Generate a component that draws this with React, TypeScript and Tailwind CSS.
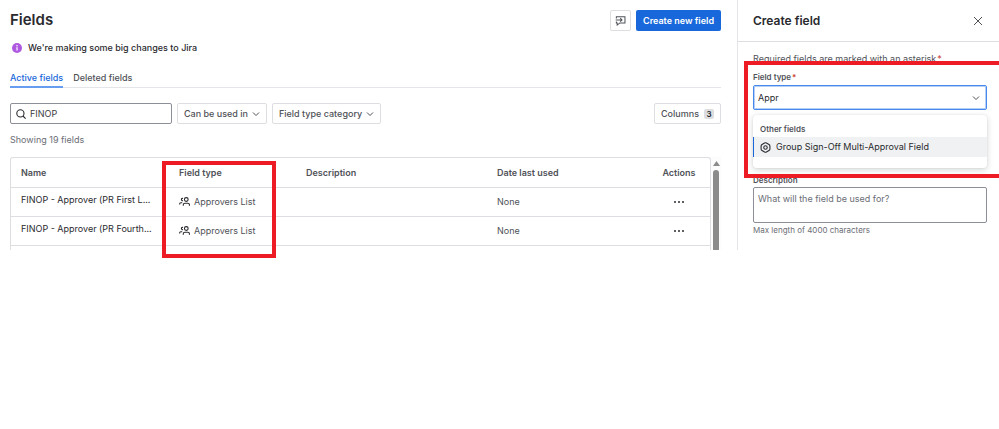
import React from "react";

const rows = [
  { name: "FINOP - Approver (PR First L...", type: "Approvers List", used: "None" },
  { name: "FINOP - Approver (PR Fourth...", type: "Approvers List", used: "None" },
];

function Chevron({ className = "" }: { className?: string }) {
  return (
    <svg viewBox="0 0 8 8" className={`size-2 shrink-0 ${className}`} fill="none" stroke="currentColor" strokeWidth="1" aria-hidden="true">
      <path d="M1 2.5 4 5.5 7 2.5" />
    </svg>
  );
}

function PeopleIcon() {
  return (
    <svg viewBox="0 0 16 13" className="h-[9px] w-[11px] shrink-0 text-[#292a2e]" fill="none" stroke="currentColor" strokeWidth="1.6" aria-hidden="true">
      <circle cx="10.6" cy="3.6" r="2.7" />
      <path d="M6.2 12.8v-1.4c0-1.5 1-2.4 2.4-2.4h4.2c1.4 0 2.4.9 2.4 2.4v1.4" />
      <path d="M5.8 2A1.7 1.7 0 1 0 5.8 5.2M.9 11v-.9c0-1 .8-1.8 1.8-1.8h2" />
    </svg>
  );
}

function FeedbackIcon() {
  return (
    <svg viewBox="0 0 16 16" className="size-[11px]" fill="none" stroke="currentColor" strokeWidth="1.5" aria-hidden="true">
      <path d="M2 5.2V2.5h12.5v9H7L3.2 14.6v-3.1H2V9.4" />
      <path d="M1 7.2h9M7.6 4.6l2.6 2.6-2.6 2.6" />
    </svg>
  );
}

function FilterButton({ label }: { label: string }) {
  return (
    <button type="button" aria-haspopup="listbox" className="flex h-[21px] items-center gap-1 rounded-[2px] border border-[#dddee1] px-[6px] font-medium text-[#505258]">
      {label}
      <Chevron />
    </button>
  );
}

function FieldsPage() {
  return (
    <main className="relative min-w-0 flex-1 pt-[10px] pl-[10px]">
      <header className="mr-4 flex h-[21px] items-center justify-between">
        <h1 className="text-[15px] font-semibold text-[#292a2e]">Fields</h1>
        <div className="flex gap-[5px]">
          <button type="button" aria-label="Give feedback" className="flex h-[21px] w-[21px] items-center justify-center rounded-[2px] border border-[#dddee1] text-[#505258]">
            <FeedbackIcon />
          </button>
          <button type="button" className="h-[21px] rounded-[2px] bg-[#1868db] px-[7px] font-semibold text-white">
            Create new field
          </button>
        </div>
      </header>

      <p className="mt-[10px] flex h-[14px] items-center gap-[6px] pl-[2px] font-medium text-[#292a2e]">
        <svg viewBox="0 0 10 10" className="size-[10px]" aria-hidden="true">
          <circle cx="5" cy="5" r="5" fill="#af59e1" />
          <circle cx="5" cy="2.8" r=".8" fill="#fff" />
          <path d="M5 4.3v3.2" stroke="#fff" strokeWidth="1.2" />
        </svg>
        We're making some big changes to Jira
      </p>

      <nav className="mt-[15px] mr-4 flex gap-[10px] border-b border-[#e4e5e8] font-medium text-[#505258]">
        <a href="#active" aria-current="page" className="-mb-px h-[18px] border-b-2 border-[#669df1] leading-4 text-[#1868db]">Active fields</a>
        <a href="#deleted" className="leading-4">Deleted fields</a>
      </nav>

      <div className="mt-[15px] mr-4 flex h-[21px] items-center gap-[5px]">
        <label className="flex h-[21px] w-[162px] items-center gap-1 rounded-[2px] border border-[#8c8f97] px-[5px]">
          <svg viewBox="0 0 10 10" className="size-[10px] shrink-0 text-[#292a2e]" fill="none" stroke="currentColor" strokeWidth="1.1" aria-hidden="true">
            <circle cx="4.4" cy="4.4" r="3.6" />
            <path d="m7 7 2.6 2.6" />
          </svg>
          <input aria-label="Search fields" defaultValue="FINOP" className="min-w-0 flex-1 text-[#3b3d42] outline-none" />
        </label>
        <FilterButton label="Can be used in" />
        <FilterButton label="Field type category" />
        <button type="button" className="ml-auto flex h-[21px] items-center gap-[5px] rounded-[2px] border border-[#dddee1] px-[6px] font-medium text-[#505258]">
          Columns
          <span className="flex h-[10px] w-[10px] items-center justify-center rounded-[2px] bg-[#dddee1] text-[8px] font-semibold text-[#292a2e]">3</span>
        </button>
      </div>

      <p className="mt-[9px] leading-[14px] text-[#6b6e76]">Showing 19 fields</p>

      <div className="mt-[10px] mr-4 flex items-stretch">
        <div className="min-w-0 flex-1 rounded-t-[3px] border border-b-0 border-[#dddee1] pb-[4px]">
          <table className="w-full table-fixed text-left text-[#505258]">
            <colgroup>
              <col className="w-[157px]" />
              <col className="w-[127px]" />
              <col className="w-[191px]" />
              <col />
              <col className="w-[62px]" />
            </colgroup>
            <thead>
              <tr className="h-[29px] border-b border-[#dddee1]">
                <th className="pl-[10px] font-semibold">Name</th>
                <th className="pl-[11px] font-semibold">Field type</th>
                <th className="pl-[11px] font-semibold">Description</th>
                <th className="pl-[11px] font-semibold">Date last used</th>
                <th className="text-center font-semibold">Actions</th>
              </tr>
            </thead>
            <tbody>
              {rows.map((row) => (
                <tr key={row.name} className="h-[29px] border-b border-[#dddee1]">
                  <td className="truncate pb-[4px] pl-[10px] text-[#292a2e]">{row.name}</td>
                  <td className="pl-[11px]">
                    <span className="flex items-center gap-1">
                      <PeopleIcon />
                      {row.type}
                    </span>
                  </td>
                  <td />
                  <td className="pl-[11px]">{row.used}</td>
                  <td>
                    <button type="button" aria-label="Actions" className="mx-auto flex gap-[2px]">
                      <span className="size-[2px] rounded-full bg-[#292a2e]" />
                      <span className="size-[2px] rounded-full bg-[#292a2e]" />
                      <span className="size-[2px] rounded-full bg-[#292a2e]" />
                    </button>
                  </td>
                </tr>
              ))}
            </tbody>
          </table>
        </div>
        <div className="flex w-[10px] shrink-0 flex-col items-center bg-[#fcfcfc] pt-1" aria-hidden="true">
          <svg viewBox="0 0 7 5" className="h-[5px] w-[7px]">
            <path d="M3.5 0 7 5H0z" fill="#8b8b8b" />
          </svg>
          <span className="mt-1 w-[6px] flex-1 rounded-t-full bg-[#8b8b8b]" />
        </div>
      </div>

      <div className="pointer-events-none absolute top-[161px] left-[162px] h-[97px] w-[114px] border-4 border-[#ed1c24]" />
    </main>
  );
}

function CreateFieldPanel() {
  return (
    <aside className="relative w-[262px] shrink-0 border-l border-[#e4e5e8]">
      <header className="flex h-[42px] items-center justify-between border-b border-[#dddee1] pr-4 pl-[15px]">
        <h2 className="text-[12px] font-semibold text-[#292a2e]">Create field</h2>
        <button type="button" aria-label="Close" className="text-[#505258]">
          <svg viewBox="0 0 10 10" className="size-[10px]" fill="none" stroke="currentColor" strokeWidth="1" aria-hidden="true">
            <path d="m1 1 8 8M9 1 1 9" />
          </svg>
        </button>
      </header>

      <form className="pr-3 pl-[15px] text-[#505258]">
        <p className="mt-[10px] leading-[14px]">
          Required fields are marked with an asterisk<span className="ml-px text-[#c9372c]">*</span>
        </p>

        <div className="relative mt-1">
          <label htmlFor="field-type" className="block text-[8px] leading-[14px] font-semibold">
            Field type<span className="ml-px text-[#c9372c]">*</span>
          </label>
          <div className="mt-px flex h-[25px] items-center rounded-[2px] border border-[#4688ec] px-1 ring-1 ring-[#4688ec]/40 ring-inset">
            <input id="field-type" role="combobox" aria-expanded="true" aria-controls="field-type-options" defaultValue="Appr" className="min-w-0 flex-1 text-[#292a2e] outline-none" />
            <Chevron className="mr-[2px]" />
          </div>
          <div id="field-type-options" role="listbox" className="absolute top-full right-0 left-0 mt-[5px] rounded-[3px] bg-white pt-[7px] pb-[11px] shadow-[0_2px_6px_rgba(30,31,33,0.18),0_0_1px_rgba(30,31,33,0.2)]">
            <p className="pl-[7px] text-[8px] leading-[15px] font-semibold">Other fields</p>
            <div role="option" aria-selected="true" className="flex h-[20px] items-center bg-[#f0f1f2] text-[#292a2e]">
              <span className="w-px self-stretch bg-[#1868db]" />
              <svg viewBox="0 0 12 12" className="mr-[5px] ml-[6px] size-[11px]" fill="none" stroke="currentColor" strokeWidth="1.2" aria-hidden="true">
                <path d="M5 1.1a2 2 0 0 1 2 0l2.8 1.6a2 2 0 0 1 1 1.7v3.2a2 2 0 0 1-1 1.7L7 10.9a2 2 0 0 1-2 0L2.2 9.3a2 2 0 0 1-1-1.7V4.4a2 2 0 0 1 1-1.7z" />
                <circle cx="6" cy="6" r="1.9" />
              </svg>
              Group Sign-Off Multi-Approval Field
            </div>
          </div>
        </div>

        <label htmlFor="description" className="mt-[63px] block text-[8px] leading-[14px] font-semibold">Description</label>
        <textarea id="description" placeholder="What will the field be used for?" className="block h-[36px] w-full resize-none rounded-[2px] border border-[#8c8f97] px-1 py-1 leading-[14px] placeholder:text-[#6b6e76]" />
        <p className="text-[8px] leading-[14px] text-[#6b6e76]">Max length of 4000 characters</p>
      </form>

      <div className="pointer-events-none absolute top-[61px] right-0 left-[6px] h-[117px] border-4 border-r-0 border-[#ed1c24]" />
    </aside>
  );
}

export default function App() {
  return (
    <div className="min-h-screen bg-white font-['Inter',sans-serif] text-[9px]">
      <div className="flex">
        <FieldsPage />
        <CreateFieldPanel />
      </div>
    </div>
  );
}
